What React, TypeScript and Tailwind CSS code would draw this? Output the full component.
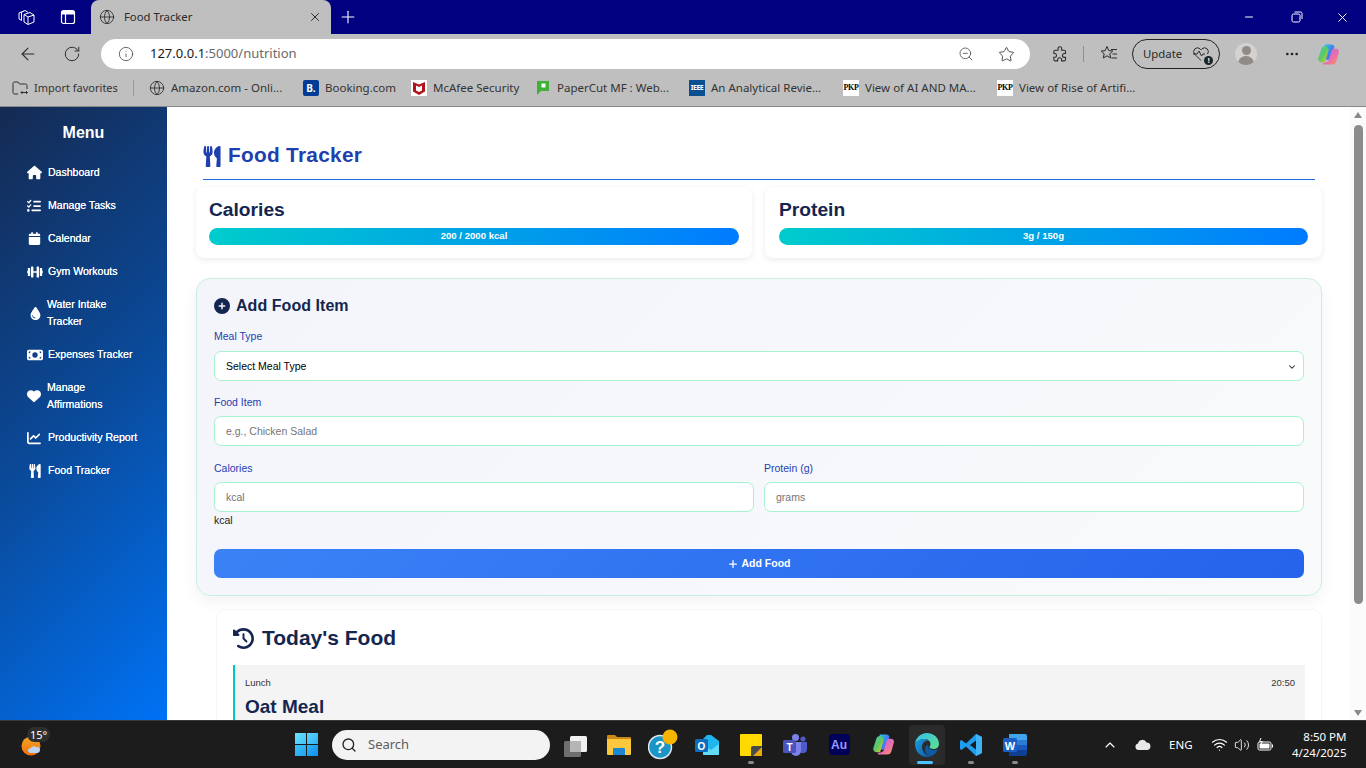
import React from "react";
import { Globe, X, Plus, ArrowLeft, RotateCw, Info, ZoomOut, Star, Minus, ChevronDown, ChevronUp, Search, Volume2, Wifi, MoreHorizontal } from "lucide-react";
import { FaHouse, FaCalendar, FaDroplet, FaMoneyBill, FaHeart, FaChartLine, FaCirclePlus, FaClockRotateLeft, FaPlus, FaListCheck } from "react-icons/fa6";
import { FaDumbbell, FaUtensils } from "react-icons/fa";

const UI = "font-['Noto_Sans','Open_Sans',sans-serif]";
const PAGE = "font-['Liberation_Sans',Arial,sans-serif]";

function Copilot({ size = 24 }: { size?: number }) {
  return (
    <svg width={size} height={size} viewBox="0 0 24 24">
      <defs>
        <linearGradient id="cpa" x1="0" y1="0" x2="1" y2="1"><stop offset="0" stopColor="#2fc8e8" /><stop offset="0.55" stopColor="#3b7ff0" /><stop offset="1" stopColor="#7a5cf0" /></linearGradient>
        <linearGradient id="cpb" x1="0" y1="0" x2="1" y2="1"><stop offset="0" stopColor="#3fd0d0" /><stop offset="0.5" stopColor="#5cc860" /><stop offset="1" stopColor="#f3c52e" /></linearGradient>
        <linearGradient id="cpc" x1="0" y1="0" x2="1" y2="1"><stop offset="0" stopColor="#a56cf0" /><stop offset="0.6" stopColor="#ee6fa8" /><stop offset="1" stopColor="#f79a4a" /></linearGradient>
      </defs>
      <path d="M8 1.500h7c1.800 0 2.800 1 3.200 2.500L15 15c-.5 1.600-1.500 2.500-3 2.500H7L9 6c.2-1 0-2-1-2Z" fill="url(#cpa)" />
      <path d="M8.500 3c-2.300 0-3.500 1.200-4 3L1.500 15.500C.8 18 2.300 20 4.500 20h4l3.500-12c.5-2-1-5-3.500-5Z" fill="url(#cpb)" />
      <path d="M17 6h2.800c2.400 0 3.600 2 3 4l-2.500 9c-.6 2-2 3.500-4.100 3.500H7.500c-1.800 0-1.800-1.400-.8-2 3.600-.4 5.100-1 5.900-3.400l2-7C15.200 8 15.800 6 17 6Z" fill="url(#cpc)" />
    </svg>
  );
}

function Mark({ className, children }: { className: string; children?: React.ReactNode }) {
  return <span className={`flex h-4 w-4 shrink-0 items-center justify-center ${className}`}>{children}</span>;
}

function Bookmark({ width, icon, label }: { width: string; icon: React.ReactNode; label: string }) {
  return (
    <div className={`flex shrink-0 items-center gap-[6px] ${width}`}>
      {icon}
      <span className="whitespace-nowrap text-[11.500px] text-[#333]">{label}</span>
    </div>
  );
}

function BrowserChrome() {
  const globe = <Globe size={16} strokeWidth={1.300} className="shrink-0 text-[#2a2a2a]" />;
  const pkp = <Mark className="bg-white font-['Liberation_Serif',serif] text-[8px] font-bold tracking-[-0.3px] text-black">PKP</Mark>;
  return (
    <div className={`shrink-0 ${UI}`}>
      <div className="flex h-[34px] items-stretch bg-[#000080] text-white">
        <div className="flex w-[91px] items-center">
          <svg width="18" height="18" viewBox="0 0 18 18" fill="none" stroke="#fff" strokeWidth="1" className="ml-[17px]">
            <path d="M7 6.500 13 4.500 17 7v7l-6 2.500-4-2.500Z" /><path d="M7 6.500l4 2.500 6-2M11 9v7.500" /><path d="M4.500 12.500 2 11V5l6-2.500 3 1.800" /><path d="M6.500 3.200 4.500 4.300v8" />
          </svg>
          <svg width="16" height="16" viewBox="0 0 16 16" fill="none" stroke="#fff" strokeWidth="1.200" className="ml-[25px]">
            <rect x="1.500" y="1.500" width="13" height="13" rx="2" /><path d="M1.500 5h13M5.500 5v9.500" />
            <rect x="2" y="2" width="12" height="3" fill="#fff" stroke="none" />
          </svg>
        </div>
        <div className="flex w-[240px] items-center rounded-t-[8px] bg-[#bfbfbf] text-[#2a2a2a]">
          <Globe size={16} strokeWidth={1.300} className="ml-[8px]" />
          <span className="ml-[9px] flex-1 text-[11.300px]">Food Tracker</span>
          <X size={14} strokeWidth={1.600} className="mr-[9px] text-[#222]" />
        </div>
        <Plus size={20} strokeWidth={1.300} className="ml-[7px] self-center" />
        <div className="flex-1" />
        <Minus size={12} strokeWidth={2} className="mr-[36px] self-center" />
        <svg width="12" height="12" viewBox="0 0 12 12" fill="none" stroke="#fff" strokeWidth="1" className="mr-[32px] self-center">
          <rect x="1" y="3" width="8" height="8" rx="1.500" /><path d="M3.500 1H9.500a1.500 1.500 0 0 1 1.500 1.500V8" />
        </svg>
        <X size={15} strokeWidth={1.500} className="mr-[16px] self-center" />
      </div>
      <div className="flex h-[38px] items-center bg-[#bfbfbf] pt-[2px] text-[#2a2a2a]">
        <ArrowLeft size={20} strokeWidth={1.300} className="ml-[18px]" />
        <RotateCw size={18} strokeWidth={1.300} className="ml-[25px]" />
        <div className="ml-[20px] flex h-[30px] w-[929px] items-center rounded-full bg-white">
          <Info size={16} strokeWidth={1.300} className="ml-[17px] text-[#555]" />
          <span className="ml-[16px] flex-1 text-[13px]"><span className="text-[#1a1a1a]">127.0.0.1</span><span className="text-[#6a6a6a]">:5000/nutrition</span></span>
          <ZoomOut size={16} strokeWidth={1.300} className="mr-[24px] text-[#555]" />
          <Star size={17} strokeWidth={1.300} className="mr-[15px] text-[#444]" />
        </div>
        <svg width="17" height="17" viewBox="0 0 24 24" fill="none" stroke="#2c2c2c" strokeWidth="1.500" className="ml-[21px]">
          <path d="M10 3.500a2.500 2.500 0 0 1 5 0V6h3.500c1 0 2 .8 2 2v2.500H19a2.800 2.800 0 0 0 0 5.600h1.500V19c0 1.200-1 2-2 2H15v-1.500a2.800 2.800 0 0 0-5.600 0V21H6c-1.200 0-2-.8-2-2v-3h1.500a2.800 2.800 0 0 0 0-5.500H4V8c0-1.200.8-2 2-2h4Z" />
        </svg>
        <div className="ml-[15px] h-[16px] w-px bg-[#8f8f8f]" />
        <svg width="18" height="18" viewBox="0 0 18 18" fill="none" stroke="#2c2c2c" strokeWidth="1" className="ml-[16px]">
          <path d="M7 1.500 8.800 5.600l4 .4-3 2.800.9 4.200L7 10.800 3.300 13l.9-4.200-3-2.800 4-.4Z" /><path d="M11 4.500h6M12.500 9H17M11.500 13H17" />
        </svg>
        <div className="ml-[14px] flex h-[30px] w-[88px] items-center rounded-full border border-[#222] pl-[10px]">
          <span className="text-[11.400px] text-[#2a2a2a]">Update</span>
          <span className="relative ml-[10px] block h-[16px] w-[18px]">
            <svg width="18" height="16" viewBox="0 0 18 16" fill="none" stroke="#2a2a2a" strokeWidth="1">
              <path d="M9 14.500 2.500 8A3.800 3.800 0 0 1 8 2.800l1 1 1-1A3.800 3.800 0 0 1 15.500 8" /><path d="M1 8h4l2-3 2.500 5 1.500-2h2" />
            </svg>
            <span className="absolute bottom-[-3px] right-[-3px] flex h-[9px] w-[9px] items-center justify-center rounded-full bg-[#222] text-[7px] font-bold leading-none text-white">!</span>
          </span>
        </div>
        <div className="ml-[15px] flex h-[22px] w-[22px] flex-col items-center overflow-hidden rounded-full bg-[#d4d2cf]">
          <div className="mt-[3px] h-[9px] w-[9px] rounded-full bg-[#8f8b88]" />
          <div className="mt-[1px] h-[10px] w-[16px] rounded-t-full bg-[#8f8b88]" />
        </div>
        <MoreHorizontal size={16} strokeWidth={2} className="ml-[27px] text-[#222]" />
        <div className="ml-[17px]"><Copilot size={23} /></div>
      </div>
      <div className="flex h-[35px] items-center border-b border-[#8a8a8a] bg-[#bfbfbf] pb-[2px] pl-[12px]">
        <div className="flex w-[121px] shrink-0 items-center gap-[6px]">
          <svg width="16" height="16" viewBox="0 0 16 16" fill="none" stroke="#333" strokeWidth="1" className="shrink-0">
            <path d="M6 14H2.500A1.500 1.500 0 0 1 1 12.500v-9A1.500 1.500 0 0 1 2.500 2H6l1.500 2h6A1.500 1.500 0 0 1 15 5.500V9" /><path d="M9 12.500h6.500M9 12.500l1.500-1.500M9 12.500 10.500 14M15.500 12.500 14 11M15.500 12.500 14 14" />
          </svg>
          <span className="whitespace-nowrap text-[11px] text-[#333]">Import favorites</span>
        </div>
        <div className="mr-[15px] h-[16px] w-px shrink-0 bg-[#9a9a9a]" />
        <Bookmark width="w-[154px]" icon={globe} label="Amazon.com - Onli..." />
        <Bookmark width="w-[108px]" icon={<Mark className="rounded-[2px] bg-[#003b95] text-[10px] font-bold text-white">B.</Mark>} label="Booking.com" />
        <Bookmark width="w-[124px]" icon={
          <Mark className="bg-white"><svg width="14" height="15" viewBox="0 0 14 15"><path d="M1 1l6 2.500L13 1v9.500L7 14l-6-3.500Z" fill="#b0141c" /><path d="M4 4.500l3 1.500 3-1.500v5L7 11 4 9.500Z" fill="#fff" /></svg></Mark>
        } label="McAfee Security" />
        <Bookmark width="w-[154px]" icon={
          <Mark className=""><svg width="14" height="16" viewBox="0 0 14 16"><path d="M1 1h12v10H5l-4 4Z" fill="#3fb13a" /><rect x="5.500" y="3.500" width="4" height="4" fill="#fff" /></svg></Mark>
        } label="PaperCut MF : Web..." />
        <Bookmark width="w-[154px]" icon={<Mark className="bg-[#0a4f8f] text-[7px] font-bold tracking-[-0.5px] text-white">IEEE</Mark>} label="An Analytical Revie..." />
        <Bookmark width="w-[154px]" icon={pkp} label="View of AI AND MA..." />
        <Bookmark width="w-[150px]" icon={pkp} label="View of Rise of Artifi..." />
      </div>
    </div>
  );
}

const menu: { icon: React.ReactNode; label: React.ReactNode; cell: string }[] = [
  { icon: <FaHouse size={15} />, label: "Dashboard", cell: "w-[21px]" },
  { icon: <FaListCheck size={14} />, label: "Manage Tasks", cell: "w-[21px]" },
  { icon: <FaCalendar size={13} className="ml-[1px]" />, label: "Calendar", cell: "w-[21px]" },
  { icon: <FaDumbbell size={16} />, label: "Gym Workouts", cell: "w-[21px]" },
  { icon: <FaDroplet size={13} className="ml-[2px]" />, label: <>Water Intake<br />Tracker</>, cell: "w-[20px]" },
  { icon: <FaMoneyBill size={16} />, label: "Expenses Tracker", cell: "w-[21px]" },
  { icon: <FaHeart size={14} />, label: <>Manage<br />Affirmations</>, cell: "w-[20px]" },
  { icon: <FaChartLine size={14} />, label: "Productivity Report", cell: "w-[21px]" },
  { icon: <FaUtensils size={14} className="ml-[1px]" />, label: "Food Tracker", cell: "w-[21px]" },
];

function Sidebar() {
  return (
    <aside className={`w-[167px] shrink-0 bg-[linear-gradient(135deg,#152a52_0%,#0a4a9a_50%,#0072f5_100%)] text-white ${PAGE}`}>
      <h2 className="pt-[17px] text-center text-[16px] font-bold leading-[18px]">Menu</h2>
      <nav className="mt-[14px] pl-[27px]">
        {menu.map((m, i) => (
          <div key={i} className="flex items-center py-[8px] text-[10.560px] leading-[17px] [text-shadow:0_0_0.4px_#fff]">
            <span className={`flex shrink-0 ${m.cell}`}>{m.icon}</span>
            <span>{m.label}</span>
          </div>
        ))}
      </nav>
    </aside>
  );
}

function Stat({ title, value, className }: { title: string; value: string; className: string }) {
  return (
    <div className={`rounded-[8px] bg-white pb-[13px] pt-[12px] shadow-[0_2px_6px_rgba(0,0,0,0.08)] ${className}`}>
      <div className="text-[19.200px] font-bold leading-[22px] text-[#14264f]">{title}</div>
      <div className="mt-[7px] flex h-[17px] items-center justify-center rounded-full bg-[linear-gradient(90deg,#00cccc,#007bff)] text-[9.600px] font-bold text-white">{value}</div>
    </div>
  );
}

const labelCls = "block text-[10.500px] leading-[12px] text-[#1e40af]";
const inputCls = "flex h-[30px] items-center rounded-[7px] border border-[#a7f3d0] bg-white px-[11px] pt-[2px] text-[10.500px]";

function Main() {
  return (
    <main className={`min-w-0 flex-1 overflow-hidden bg-white pl-[29px] pr-[28px] ${PAGE}`}>
      <div className="mx-[7px] flex h-[73px] items-end border-b border-[#1a6de0] pb-[12px] text-[#1e40af]">
        <FaUtensils size={21} className="mr-[7px] w-[18px]" />
        <h1 className="text-[20.800px] font-bold leading-[24px] tracking-[0.3px]">Food Tracker</h1>
      </div>
      <div className="mt-[7px] flex gap-[13px]">
        <Stat className="w-[556px] pl-[13px] pr-[13px]" title="Calories" value="200 / 2000 kcal" />
        <Stat className="w-[557px] pl-[14px] pr-[14px]" title="Protein" value="3g / 150g" />
      </div>
      <section className="mt-[20px] h-[318px] rounded-[14px] border border-[#c9efe2] bg-[linear-gradient(135deg,#f4f5fb,#f9fafb)] px-[17px] pt-[17px] shadow-[0_6px_16px_rgba(0,0,0,0.05)]">
        <div className="flex items-center text-[#14264f]">
          <FaCirclePlus size={16} className="mr-[6px]" />
          <h2 className="text-[16px] font-bold leading-[20px] tracking-[0.05px]">Add Food Item</h2>
        </div>
        <label className={`${labelCls} mt-[14px]`}>Meal Type</label>
        <div className={`${inputCls} mt-[9px] justify-between pr-[6px] text-black`}>
          <span>Select Meal Type</span>
          <ChevronDown size={10} strokeWidth={2.500} className="text-[#222]" />
        </div>
        <label className={`${labelCls} mt-[15px]`}>Food Item</label>
        <div className={`${inputCls} mt-[8px] text-[#757575]`}>e.g., Chicken Salad</div>
        <div className="mt-[16px] grid grid-cols-2 gap-[10px]">
          <div>
            <label className={labelCls}>Calories</label>
            <div className={`${inputCls} mt-[8px] text-[#757575]`}>kcal</div>
            <div className="mt-[2px] text-[10.500px] leading-[12px] text-[#222]">kcal</div>
          </div>
          <div>
            <label className={labelCls}>Protein (g)</label>
            <div className={`${inputCls} mt-[8px] text-[#757575]`}>grams</div>
          </div>
        </div>
        <button className="mt-[23px] flex h-[29px] w-full items-center justify-center gap-[4px] rounded-[7px] bg-[linear-gradient(135deg,#3b82f6,#2563eb)] text-[10.500px] font-bold text-white">
          <FaPlus size={10} />
          Add Food
        </button>
      </section>
      <section className="ml-[20px] mt-[13px] h-[200px] rounded-[10px] border border-[#f6f6f8] bg-white pl-[16px] pr-[16px] pt-[14px]">
        <div className="flex items-center text-[#14264f]">
          <FaClockRotateLeft size={21} className="mr-[8px]" />
          <h2 className="text-[21px] font-bold leading-[28px]">Today's Food</h2>
        </div>
        <div className="mt-[13px] border-l-[2.500px] border-[#00c8c8] bg-[#f4f4f5] pb-[20px] pl-[10px] pr-[10px] pt-[12px]">
          <div className="flex justify-between text-[9.500px] leading-[12px] text-[#333]">
            <span>Lunch</span>
            <span>20:50</span>
          </div>
          <div className="mt-[6px] text-[19px] font-bold leading-[24px] text-[#14264f]">Oat Meal</div>
        </div>
      </section>
    </main>
  );
}

function Scrollbar() {
  return (
    <div className="flex w-[16px] shrink-0 flex-col items-center bg-[#fbfbfb] pt-[5px]">
      <div className="h-0 w-0 border-x-[4.500px] border-b-[6px] border-x-transparent border-b-[#8a8a8a]" />
      <div className="mt-[7px] h-[479px] w-[9px] rounded-full bg-[#8c8c8c]" />
      <div className="flex-1" />
      <div className="mb-[4px] h-0 w-0 border-x-[4.500px] border-t-[6px] border-x-transparent border-t-[#8a8a8a]" />
    </div>
  );
}

function TaskIcon({ children, dot, active }: { children: React.ReactNode; dot?: boolean; active?: boolean }) {
  return (
    <div className="relative flex h-[48px] w-[44px] shrink-0 items-center justify-center">
      {active && <div className="absolute left-[4px] top-[4px] h-[40px] w-[36px] rounded-[4px] border-r-[4px] border-[#2a2a2a] bg-[#2b2b2b]" />}
      <div className="relative flex items-center justify-center">{children}</div>
      {dot && <div className="absolute bottom-[5px] left-1/2 h-[3px] w-[6px] -translate-x-1/2 rounded-full bg-[#8a8a8a]" />}
      {active && <div className="absolute bottom-[5px] left-1/2 h-[3px] w-[16px] -translate-x-[10px] rounded-full bg-[#4cc2ff]" />}
    </div>
  );
}

function Taskbar() {
  return (
    <div className={`flex h-[48px] shrink-0 items-center border-t border-[#3a3a3a] bg-[#1c1c1c] text-white ${UI}`}>
      <div className="relative ml-[21px] h-[24px] w-[26px] shrink-0">
        <svg width="24" height="24" viewBox="0 0 24 24">
          <defs><linearGradient id="sun" x1="0" y1="0" x2="0" y2="1"><stop offset="0" stopColor="#f5a623" /><stop offset="1" stopColor="#f0700f" /></linearGradient></defs>
          <circle cx="10" cy="13" r="9.500" fill="url(#sun)" />
          <path d="M10 20c-2 0-3-1-3-2.500S8.500 15 10 15c.5-2 4-2.500 5.500-.8 2-.4 3.500.8 3.500 2.800S17.500 20 16 20Z" fill="#bcd3f0" />
        </svg>
        <span className="absolute left-[6px] top-[-6px] rounded-full bg-[#2e2e2e] px-[3px] text-[11px] leading-[15px]">15°</span>
      </div>
      <div className="ml-[248px] grid h-[23px] w-[23px] shrink-0 grid-cols-2 gap-[1px]">
        <div className="bg-[linear-gradient(135deg,#6fe0ff,#3fc3f5)]" />
        <div className="bg-[linear-gradient(135deg,#5fd3fb,#2cb1f5)]" />
        <div className="bg-[linear-gradient(135deg,#3cc0f7,#1fa4f2)]" />
        <div className="bg-[linear-gradient(135deg,#2cb2f7,#0f8ff0)]" />
      </div>
      <div className="ml-[14px] flex h-[30px] w-[218px] shrink-0 items-center rounded-full bg-[#f3f3f3]">
        <Search size={16} strokeWidth={2} className="ml-[9px] text-[#222]" />
        <span className="ml-[11px] text-[13px] text-[#5c5c5c]">Search</span>
      </div>
      <div className="ml-[3px] flex">
        <TaskIcon>
          <svg width="25" height="24" viewBox="0 0 25 24">
            <rect x="7" y="3" width="17" height="16" rx="1.500" fill="#f2f2f2" /><rect x="1" y="8" width="17" height="16" rx="1.500" fill="#6f6f6f" /><rect x="7" y="8" width="11" height="11" fill="#b5b5b5" />
          </svg>
        </TaskIcon>
        <TaskIcon>
          <svg width="24" height="22" viewBox="0 0 24 22">
            <path d="M0 2a1 1 0 0 1 1-1h7l2 2h13a1 1 0 0 1 1 1v4H0Z" fill="#c98a16" /><path d="M0 5h24v15a1 1 0 0 1-1 1H1a1 1 0 0 1-1-1Z" fill="#fcc73d" /><path d="M6 15a1 1 0 0 1 1-1h10a1 1 0 0 1 1 1v6H6Z" fill="#1c87d0" />
          </svg>
        </TaskIcon>
        <TaskIcon>
          <svg width="30" height="31" viewBox="0 0 30 31">
            <circle cx="12" cy="18" r="11.500" fill="#1b94c8" stroke="#dfe9ee" strokeWidth="1.500" /><circle cx="22" cy="8" r="7.500" fill="#f5b400" />
            <text x="12" y="24" textAnchor="middle" fontSize="17" fontWeight="700" fill="#fff" fontFamily="Liberation Sans">?</text>
          </svg>
        </TaskIcon>
        <TaskIcon>
          <svg width="24" height="22" viewBox="0 0 24 22">
            <path d="M12 1h4l8 6v13a1 1 0 0 1-1 1H9a1 1 0 0 1-1-1V5Z" fill="#1fb6f0" /><path d="M8 11l8 5 8-6v10a1 1 0 0 1-1 1H9a1 1 0 0 1-1-1Z" fill="#62dbf7" /><rect x="0" y="5" width="13" height="13" rx="1.500" fill="#0f6cbd" />
            <text x="6.500" y="15.500" textAnchor="middle" fontSize="10" fontWeight="700" fill="#fff" fontFamily="Liberation Sans">O</text>
          </svg>
        </TaskIcon>
        <TaskIcon dot>
          <svg width="22" height="22" viewBox="0 0 22 22">
            <rect width="22" height="22" rx="1" fill="#ffd900" /><path d="M11 22v-8a2 2 0 0 1 2-2h9v10Z" fill="#4a4a4a" /><path d="M13 22l9-9v9Z" fill="#e8a90c" />
          </svg>
        </TaskIcon>
        <TaskIcon>
          <svg width="24" height="24" viewBox="0 0 24 24">
            <circle cx="12.500" cy="4.500" r="3.500" fill="#7b83eb" /><circle cx="20" cy="6" r="2.600" fill="#5059c9" /><path d="M17 9h7v7a4 4 0 0 1-4 4h-2Z" fill="#5059c9" /><path d="M8 9h10v9a5 5 0 0 1-10 0Z" fill="#7b83eb" /><rect x="0" y="7" width="13" height="13" rx="1.500" fill="#4b53bc" />
            <text x="6.500" y="17.500" textAnchor="middle" fontSize="10" fontWeight="700" fill="#fff" fontFamily="Liberation Sans">T</text>
          </svg>
        </TaskIcon>
        <TaskIcon>
          <div className="flex h-[21px] w-[21px] items-center justify-center rounded-[4px] bg-[#00005b] font-['Liberation_Sans',sans-serif] text-[12px] font-bold text-[#9a9aff]">Au</div>
        </TaskIcon>
        <TaskIcon><Copilot size={23} /></TaskIcon>
        <TaskIcon active>
          <svg width="24" height="24" viewBox="0 0 24 24">
            <defs><linearGradient id="edg" x1="0" y1="0" x2="1" y2="1"><stop offset="0" stopColor="#1b9de2" /><stop offset="1" stopColor="#0c59a4" /></linearGradient><linearGradient id="edg2" x1="0" y1="0" x2="1" y2="1"><stop offset="0" stopColor="#35c1f1" /><stop offset="1" stopColor="#5fe08a" /></linearGradient></defs>
            <path d="M12 0c7 0 12 5 12 11 0 3-2.500 5-5.500 5-2 0-4-.7-4-2 0-.8 1-1 1-3 0-3-3-5-6-5C5 6 1 8.500 0 11 .5 5 5.500 0 12 0Z" fill="url(#edg2)" />
            <path d="M0 11c1-3 5-5 9.500-5 1.500 0 3 .6 4 1.500C10 7 7 10 7 14c0 4 3 8 8 9.500-1 .4-2 .5-3 .5C5 24 0 18 0 11Z" fill="url(#edg)" />
            <path d="M15 23.500c-3-1-5-3.500-5-7 0-2 1-4 3-5-.3 2.500 1 5 5 5.500 2 .2 4-.4 5-1.500-1 4-4 7-8 8Z" fill="#0c59a4" />
          </svg>
        </TaskIcon>
        <TaskIcon dot>
          <svg width="24" height="24" viewBox="0 0 24 24">
            <path d="M17 1l6 3v16l-6 3L7 13.500 2.500 17 1 16v-8l1.500-1L7 10.500Zm0 6.500L11 12l6 4.500Z" fill="#1f9cf0" /><path d="M17 1l6 3v16l-6 3Z" fill="#3fb4f5" />
          </svg>
        </TaskIcon>
        <TaskIcon dot>
          <svg width="24" height="22" viewBox="0 0 24 22">
            <path d="M6 0h16a2 2 0 0 1 2 2v4H6Z" fill="#41a5ee" /><rect x="6" y="6" width="18" height="5" fill="#2b7cd3" /><rect x="6" y="11" width="18" height="5" fill="#185abd" /><path d="M6 16h18v4a2 2 0 0 1-2 2H6Z" fill="#103f91" /><rect x="0" y="4" width="14" height="14" rx="1.500" fill="#1a5ec4" />
            <text x="7" y="15.500" textAnchor="middle" fontSize="11" fontWeight="700" fill="#fff" fontFamily="Liberation Sans">W</text>
          </svg>
        </TaskIcon>
      </div>
      <ChevronUp size={16} strokeWidth={1.600} className="ml-[65px] text-white" />
      <svg width="16" height="11" viewBox="0 0 16 11" className="ml-[17px]"><path d="M3.500 11A3.300 3.300 0 0 1 3 4.500 4.500 4.500 0 0 1 11.500 3.500 3.800 3.800 0 0 1 12.500 11Z" fill="#e8e8e8" /></svg>
      <span className="ml-[18px] text-[11.500px]">ENG</span>
      <Wifi size={17} strokeWidth={1.600} className="ml-[18px]" />
      <Volume2 size={16} strokeWidth={1.300} className="ml-[6px]" />
      <svg width="17" height="14" viewBox="0 0 17 14" fill="none" stroke="#fff" strokeWidth="1" className="ml-[7px]">
        <rect x="1" y="4" width="13" height="8" rx="1.500" /><rect x="2.500" y="5.500" width="10" height="5" fill="#fff" stroke="none" /><path d="M15.500 6.500v3" /><path d="M4 0 2.500 3.500h3L4 6" />
      </svg>
      <div className="ml-[9px] w-[64px] text-right text-[11.500px] leading-[16px]">
        <div>8:50 PM</div>
        <div>4/24/2025</div>
      </div>
    </div>
  );
}

export default function App() {
  return (
    <div className="flex h-[768px] w-[1366px] flex-col overflow-hidden">
      <BrowserChrome />
      <div className="flex min-h-0 flex-1">
        <Sidebar />
        <Main />
        <Scrollbar />
      </div>
      <Taskbar />
    </div>
  );
}
